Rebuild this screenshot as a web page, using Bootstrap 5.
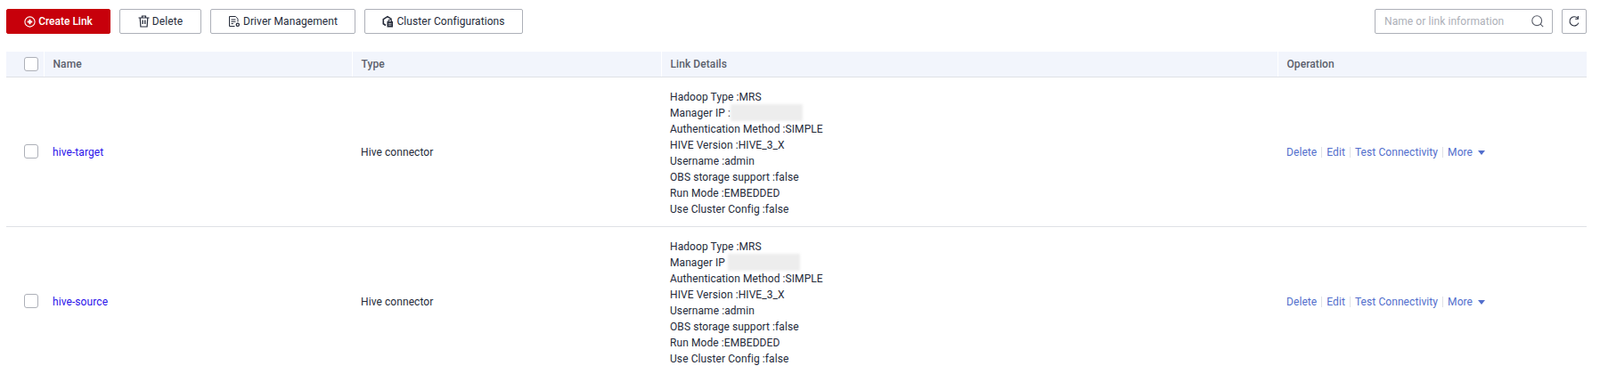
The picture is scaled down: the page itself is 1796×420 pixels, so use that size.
<!DOCTYPE html>
<html lang="en">
<head>
  <meta charset="UTF-8">
  <title>Links</title>
  <link href="https://cdn.jsdelivr.net/npm/bootstrap@5.3.0/dist/css/bootstrap.min.css" rel="stylesheet">
  <style>
    html, body { overflow: hidden; }
    body {
      font-family: Roboto, "Liberation Sans", sans-serif;
      font-size: 12px;
      letter-spacing: .08px;
      color: #252b3a;
      background: #fff;
      padding: 10px 15px 0 7px;
    }
    .bar-btn {
      height: 28px;
      padding: 0;
      font-size: 12px;
      line-height: 1;
      letter-spacing: .08px;
      border: 1px solid #adb0b8;
      border-radius: 2px;
      background: #fff;
      color: #252b3a;
      gap: 3px;
    }
    .bar-btn:hover { background: #fff; color: #252b3a; border-color: #adb0b8; }
    .bar-btn svg { flex: none; }
    .btn-create { width: 117px; background: #c7000b; border-color: #c7000b; color: #fff; font-weight: 500; letter-spacing: 0; }
    .btn-create:hover { background: #c7000b; border-color: #c7000b; color: #fff; }
    .btn-del { width: 92px; }
    .btn-driver { width: 163px; }
    .btn-cluster { width: 178px; }
    .btn-refresh { width: 28px; }
    .toolbar-left, .toolbar-right { gap: 10px; }
    .search-box {
      width: 200px;
      height: 28px;
      border: 1px solid #adb0b8;
      border-radius: 2px;
      padding: 0 8px 0 10px;
    }
    .search-box input {
      border: 0;
      outline: 0;
      padding: 0;
      font-size: 12px;
      letter-spacing: .08px;
      color: #252b3a;
      width: 150px;
      font-family: inherit;
    }
    .search-box input::placeholder { color: #adb0b8; opacity: 1; }
    .link-table { table-layout: fixed; width: 100%; margin: 20px 0 0; font-size: 12px; line-height: 18px; color: #252b3a; }
    .link-table > :not(caption) > * > * { padding: 0 10px; box-shadow: none; color: inherit; background: transparent; }
    .link-table thead tr { height: 28px; background: #f2f5fc; }
    .link-table thead th {
      font-weight: 500;
      color: #5b5f6b;
      vertical-align: middle;
      border-bottom: 1px solid #dfe1e6;
    }
    .link-table thead th + th { border-left: 1px solid #fff; }
    .link-table tbody td { vertical-align: middle; border-bottom: 1px solid #dfe1e6; }
    .link-table tbody td.detail-cell { padding-top: 13px; padding-bottom: 10px; }
    .link-table tbody td.mid-cell { padding-top: 2px; }
    .link-table > :not(caption) > * > .check-cell { padding: 0 0 0 20px; }
    .tick {
      width: 16px;
      height: 16px;
      margin: 0;
      display: block;
      border: 1px solid #adb0b8;
      border-radius: 2px;
    }
    .name-link { color: #2a12ea; text-decoration: none; }
    .ops { color: #526ecc; }
    .ops a { color: #526ecc; text-decoration: none; }
    .ops i { display: inline-block; width: 1px; height: 12px; background: #dfe1e6; margin: 0 5px; vertical-align: -2px; }
    .caret-down {
      display: inline-block;
      width: 0;
      height: 0;
      margin-left: 6px;
      border-left: 4px solid transparent;
      border-right: 4px solid transparent;
      border-top: 5px solid #526ecc;
      vertical-align: 1px;
    }
    .ip-mask {
      display: inline-block;
      width: 81px;
      height: 19px;
      margin: -3px 0 -2px;
      vertical-align: middle;
      background: #ededed;
      filter: blur(1.5px);
    }
    .ip-mask-first { margin-left: -3px; }
    .ip-mask-second { margin-left: 0; }
  </style>
</head>
<body>
  <!-- toolbar -->
  <div class="d-flex align-items-center">
    <div class="d-flex toolbar-left">
      <button type="button" class="btn bar-btn btn-create d-flex align-items-center justify-content-center">
        <svg width="13" height="13" viewBox="0 0 13 13" fill="none" stroke="#fff"><circle cx="6.5" cy="6.5" r="5.6" stroke-width="1.1"/><path d="M3.7 6.5h5.6M6.5 3.7v5.6" stroke-width="1.9"/></svg>
        Create Link
      </button>
      <button type="button" class="btn bar-btn btn-del d-flex align-items-center justify-content-center">
        <svg width="13" height="14" viewBox="0 0 13 14" fill="none" stroke="#252b3a" stroke-width="1.2"><path d="M.5 3h12M4.5 3V1h4v2M2.2 3l.7 10h7.2l.7-10"/><path d="M5.2 5.5v4.5M7.8 5.5v4.5" stroke-width="1.3"/></svg>
        Delete
      </button>
      <button type="button" class="btn bar-btn btn-driver d-flex align-items-center justify-content-center">
        <svg width="14" height="14" viewBox="0 0 14 14" fill="none" stroke="#252b3a" stroke-width="1"><path d="M7.5 12.5H1.5V1.5h6.8l2.7 2.7v3.3M3.5 5h5M3.5 7.3h5M3.5 9.6h2.5"/><circle cx="10.8" cy="10.8" r="1.6" stroke-width="1.3"/></svg>
        Driver Management
      </button>
      <button type="button" class="btn bar-btn btn-cluster d-flex align-items-center justify-content-center">
        <svg width="13" height="14" viewBox="0 0 13 14" fill="none" stroke="#252b3a"><path d="M4 11.5 1.3 9.8V4.6L6 1.6l4.6 3" stroke-width="1.6"/><rect x="5.5" y="7" width="6.5" height="6.5" fill="#252b3a" stroke="none"/><path d="M7 7V5.4h3.5V7" stroke-width="1"/><path d="M7 9.3h3.5M7 11.2h3.5" stroke="#fff" stroke-width=".7"/></svg>
        Cluster Configurations
      </button>
    </div>
    <div class="d-flex ms-auto toolbar-right">
      <div class="search-box d-flex align-items-center justify-content-between">
        <input type="text" placeholder="Name or link information">
        <svg width="16" height="16" viewBox="0 0 16 16" fill="none" stroke="#5b5f6b" stroke-width="1.1"><circle cx="7.2" cy="7.2" r="5.4"/><path d="M11.2 11.2l3 3"/></svg>
      </div>
      <button type="button" class="btn bar-btn btn-refresh d-flex align-items-center justify-content-center">
        <svg width="14" height="14" viewBox="0 0 14 14" fill="none" stroke="#252b3a" stroke-width="1.1"><path d="M11.9 8.6A5.1 5.1 0 1 1 10.9 3.4"/><path d="M11.4 1v3.2H8.2"/></svg>
      </button>
    </div>
  </div>

  <table class="table link-table">
    <colgroup>
      <col style="width:42px"><col style="width:346px"><col style="width:347px"><col style="width:692px"><col>
    </colgroup>
    <thead>
      <tr>
        <th class="check-cell"><input class="form-check-input tick" type="checkbox"></th>
        <th>Name</th>
        <th>Type</th>
        <th>Link Details</th>
        <th>Operation</th>
      </tr>
    </thead>
    <tbody>
      <tr>
        <td class="check-cell"><input class="form-check-input tick" type="checkbox"></td>
        <td class="mid-cell"><a class="name-link" href="#">hive-target</a></td>
        <td class="mid-cell">Hive connector</td>
        <td class="detail-cell">
          Hadoop Type :MRS<br>
          Manager IP : <span class="ip-mask ip-mask-first"></span><br>
          Authentication Method :SIMPLE<br>
          HIVE Version :HIVE_3_X<br>
          Username :admin<br>
          OBS storage support :false<br>
          Run Mode :EMBEDDED<br>
          Use Cluster Config :false
        </td>
        <td class="ops mid-cell">
          <a href="#">Delete</a><i></i><a href="#">Edit</a><i></i><a href="#">Test Connectivity</a><i></i><a href="#">More<span class="caret-down"></span></a>
        </td>
      </tr>
      <tr>
        <td class="check-cell"><input class="form-check-input tick" type="checkbox"></td>
        <td class="mid-cell"><a class="name-link" href="#">hive-source</a></td>
        <td class="mid-cell">Hive connector</td>
        <td class="detail-cell">
          Hadoop Type :MRS<br>
          Manager IP <span class="ip-mask ip-mask-second"></span><br>
          Authentication Method :SIMPLE<br>
          HIVE Version :HIVE_3_X<br>
          Username :admin<br>
          OBS storage support :false<br>
          Run Mode :EMBEDDED<br>
          Use Cluster Config :false
        </td>
        <td class="ops mid-cell">
          <a href="#">Delete</a><i></i><a href="#">Edit</a><i></i><a href="#">Test Connectivity</a><i></i><a href="#">More<span class="caret-down"></span></a>
        </td>
      </tr>
    </tbody>
  </table>

  <script src="https://cdn.jsdelivr.net/npm/bootstrap@5.3.0/dist/js/bootstrap.bundle.min.js"></script>
</body>
</html>
